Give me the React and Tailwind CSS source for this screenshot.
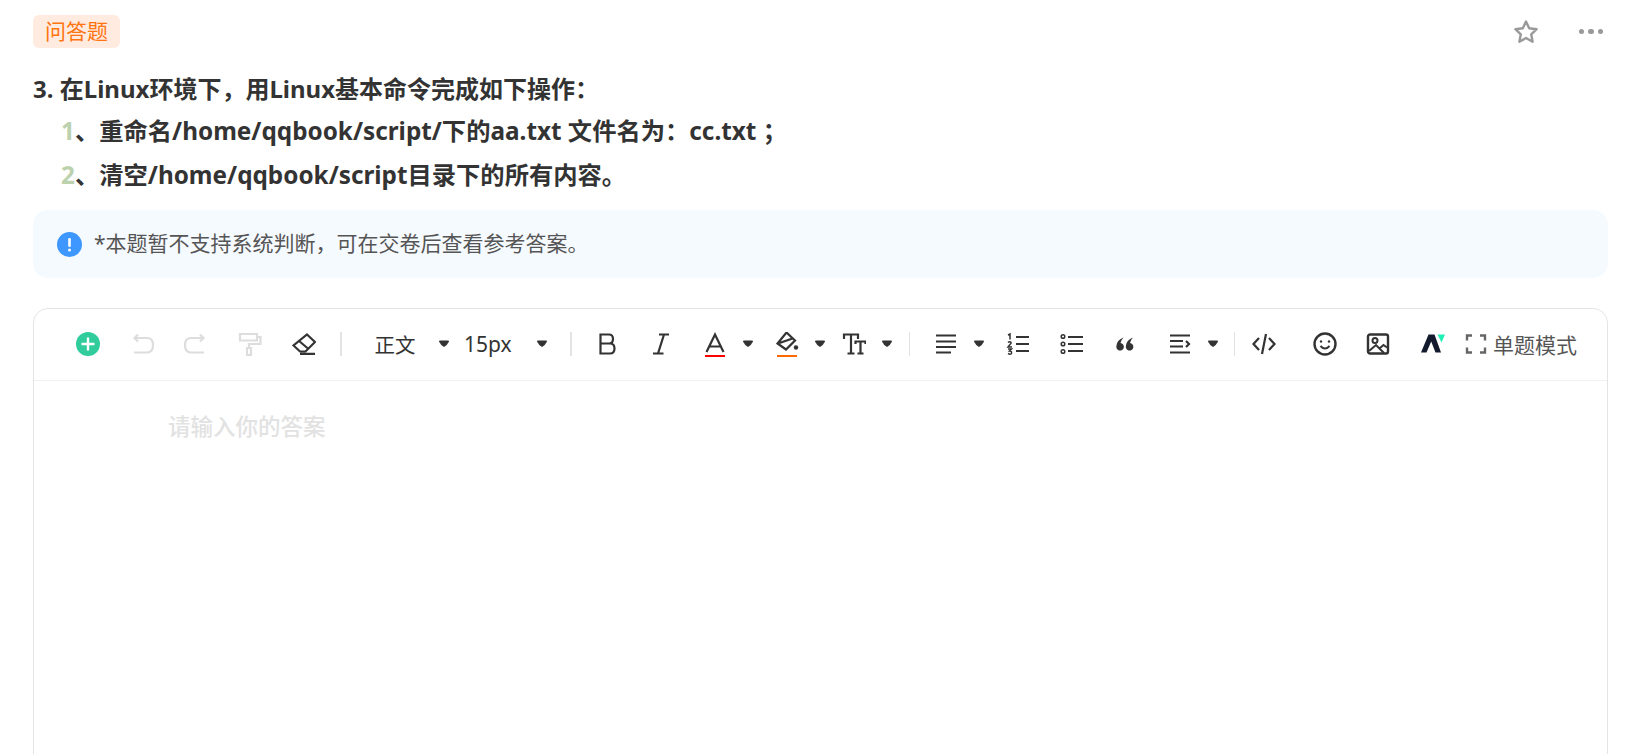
const D = "#333333";
const L = "#dddddd";

function Ico({ className = "", w = 24, h = 24, children, fill = "none", stroke = D, sw = 2.2 }) {
  return (
    <svg width={w} height={h} viewBox="0 0 24 24" fill={fill} stroke={stroke} strokeWidth={sw} strokeLinecap="butt" strokeLinejoin="miter" className={"shrink-0 " + className}>
      {children}
    </svg>
  );
}

function Caret({ className = "" }) {
  return (
    <svg width="12" height="8" viewBox="0 0 12 8" className={"shrink-0 " + className}>
      <path d="M1 1.5 Q1 0.5 2 0.5 H10 Q11 0.5 11 1.5 Q9.5 5 6 7 Q2.5 5 1 1.5Z" fill="#333" />
    </svg>
  );
}

function Sep({ className = "" }) {
  return <div className={"w-[1.5px] h-[24px] bg-[#e3e3e3] shrink-0 " + className} />;
}

export default function App() {
  return (
    <div className="h-[754px] overflow-hidden bg-white text-[#333] font-['Noto_Sans','Noto_Sans_CJK_SC',sans-serif]">
      <div className="pl-[33px] pr-[20px] pt-[15px]">
        <div className="flex items-center justify-between">
          <span className="h-[33px] w-[87px] rounded-[6px] bg-[#ffebdf] text-[#ff7410] text-[21px] leading-[33px] text-center">问答题</span>
          <div className="flex items-center">
            <svg width="26" height="26" viewBox="0 0 26 26" fill="none" stroke="#999" strokeWidth="2.4" strokeLinejoin="round">
              <path d="M13 2.5 L16.2 9.3 L23.6 10.2 L18.2 15.3 L19.6 22.7 L13 19 L6.4 22.7 L7.8 15.3 L2.4 10.2 L9.8 9.3Z" />
            </svg>
            <div className="flex gap-[4px] ml-[40px] mr-[5px]">
              <span className="w-[5.5px] h-[5.5px] rounded-full bg-[#999]" />
              <span className="w-[5.5px] h-[5.5px] rounded-full bg-[#999]" />
              <span className="w-[5.5px] h-[5.5px] rounded-full bg-[#999]" />
            </div>
          </div>
        </div>

        <div className="mt-[23px] text-[24px] leading-[36px] font-bold text-[#333]">3. 在Linux环境下，用Linux基本命令完成如下操作：</div>
        <div className="mt-[6px] pl-[28px] text-[24.3px] leading-[36px] font-bold text-[#333]">
          <span className="text-[#bcd1ad]">1</span>、重命名/home/qqbook/script/下的aa.txt 文件名为：cc.txt ；
        </div>
        <div className="mt-[8px] pl-[28px] text-[24.3px] leading-[36px] font-bold text-[#333]">
          <span className="text-[#bcd1ad]">2</span>、清空/home/qqbook/script目录下的所有内容。
        </div>

        <div className="mt-[17px] h-[68px] rounded-[15px] bg-[#f5faff] flex items-center pl-[24px]">
          <svg width="25" height="25" viewBox="0 0 25 25" className="shrink-0">
            <circle cx="12.5" cy="12.5" r="12.5" fill="#3d97ff" />
            <rect x="11.2" y="6" width="2.6" height="9" rx="1.2" fill="#fff" />
            <circle cx="12.5" cy="18" r="1.5" fill="#fff" />
          </svg>
          <span className="ml-[12px] text-[21px] text-[#555]">*本题暂不支持系统判断，可在交卷后查看参考答案。</span>
        </div>

        <div className="mt-[30px] h-[520px] rounded-t-[15px] border border-[#e4e4e4]">
          <div className="h-[72px] pb-[1px] border-b border-[#f1f1f1] flex items-center">
            <svg width="24" height="24" viewBox="0 0 24 24" className="shrink-0 ml-[42px]">
              <circle cx="12" cy="12" r="12" fill="#30cc9b" />
              <path d="M12 5.5V18.5M5.5 12H18.5" stroke="#fff" strokeWidth="2.4" />
            </svg>
            <Ico className="ml-[30.5px]" stroke={L}><path d="M7 2.5 L3.5 6 L7 9.5M3.5 6H16Q22 6 22 13Q22 20.5 16 20.5H3" /></Ico>
            <Ico className="ml-[28.5px]" stroke={L}><path d="M17 2.5 L20.5 6 L17 9.5M20.5 6H8Q2 6 2 13Q2 20.5 8 20.5H21" /></Ico>
            <Ico className="ml-[31px]" stroke={L}><path d="M2 2H19V8.5H2ZM19 5H22.5V12H11V16M9 16H13V23H9Z" /></Ico>
            <Ico className="ml-[30px]"><path d="M15 2.5 L23 10 L13.5 19.5 H8 L1.5 13.5Z M6.5 8.5 L16.5 17 M8 21.8H23" /></Ico>
            <Sep className="ml-[24px]" />
            <span className="ml-[33px] w-[42px] text-[20.5px] leading-none font-['Noto_Sans_CJK_SC',sans-serif] whitespace-nowrap">正文</span>
            <Caret className="ml-[21px]" />
            <span className="ml-[14.5px] w-[47px] text-[21px] leading-none whitespace-nowrap">15px</span>
            <Caret className="ml-[25px]" />
            <Sep className="ml-[22px]" />
            <Ico className="ml-[23.5px]"><path d="M5.5 2.5H14Q18 2.5 18 7Q18 11.5 14 11.5H5.5ZM5.5 11.5H15Q19.5 11.5 19.5 16.5Q19.5 21.5 15 21.5H5.5Z" /></Ico>
            <Ico className="ml-[30px]"><path d="M10 2.5H20M4 21.5H14.5M15 2.5L9 21.5" /></Ico>
            <div className="ml-[30px] shrink-0 relative w-[24px] h-[24px]">
              <Ico><path d="M3.5 20L12 2.5L20.5 20M6.5 14.5H17.5" /></Ico>
              <div className="absolute left-[2px] right-[2px] bottom-[-1px] h-[2.5px] bg-[#ff0000]" />
            </div>
            <Caret className="ml-[15px]" />
            <div className="ml-[21px] shrink-0 relative w-[24px] h-[24px]">
              <Ico><path d="M11.5 0.5L20 8.5L11 17.5L2.5 11.5ZM4.5 11L17.5 6.5" /><circle cx="21" cy="15.5" r="2.2" fill="#333" stroke="none" /></Ico>
              <div className="absolute left-[2px] right-[2px] bottom-[-1px] h-[2.5px] bg-[#ff6a00]" />
            </div>
            <Caret className="ml-[15px]" />
            <Ico className="ml-[16px]"><path d="M2 7V2.5H16V7M9 2.5V21.5M5.5 21.5H12.5M13.5 12V9.5H23.5V12M18.5 9.5V21.5M15.5 21.5H21.5" /></Ico>
            <Caret className="ml-[15px]" />
            <Sep className="ml-[15.5px]" />
            <Ico className="ml-[24px]"><path d="M2 3.5H22M2 9.5H22M2 15H22M2 20.5H17" /></Ico>
            <Caret className="ml-[15px]" />
            <svg width="24" height="24" viewBox="0 0 24 24" className="ml-[21px] shrink-0">
              <path d="M10 5H23M10 12H23M10 19H23" stroke="#333" strokeWidth="2.2" />
              <path d="M2 3L4 2V7.5M2 10.5Q3 9.5 4.5 10T4 12.5L2 15H6M2 17H5.5L3.5 19Q6 19 5.5 21T2 21.5" stroke="#333" strokeWidth="1.5" fill="none" />
            </svg>
            <svg width="24" height="24" viewBox="0 0 24 24" className="ml-[30px] shrink-0">
              <path d="M8 5H23M8 12H23M8 19H23" stroke="#333" strokeWidth="2.2" />
              <circle cx="3" cy="4.5" r="1.8" fill="none" stroke="#333" strokeWidth="1.5" />
              <circle cx="3" cy="12" r="1.8" fill="none" stroke="#333" strokeWidth="1.5" />
              <circle cx="3" cy="19.5" r="1.8" fill="none" stroke="#333" strokeWidth="1.5" />
            </svg>
            <svg width="24" height="24" viewBox="0 0 24 24" className="ml-[29px] shrink-0 -translate-y-[1px]">
              <path d="M10.5 6.5Q4 9 3.5 14.5A3.8 3.8 0 1 0 7.5 12Q7.8 9.5 10.5 6.5ZM20 6.5Q13.5 9 13 14.5A3.8 3.8 0 1 0 17 12Q17.3 9.5 20 6.5Z" fill="#333" />
            </svg>
            <Ico className="ml-[31px]"><path d="M2 3.5H22M2 9H15M2 14.5H15M2 20.5H22M18 9L21 12L18 15" /></Ico>
            <Caret className="ml-[15px]" />
            <Sep className="ml-[14.5px]" />
            <Ico className="ml-[17px]"><path d="M7 6L1.5 12L7 18M17 6L22.5 12L17 18M14 2L10 22" /></Ico>
            <svg width="24" height="24" viewBox="0 0 24 24" fill="none" stroke="#333" strokeWidth="2.4" className="ml-[37px] shrink-0">
              <circle cx="12" cy="12" r="10.5" />
              <path d="M7.5 14Q12 19 16.5 14" strokeWidth="2" />
              <circle cx="8" cy="9.5" r="1.2" fill="#333" stroke="none" />
              <circle cx="16" cy="9.5" r="1.2" fill="#333" stroke="none" />
            </svg>
            <svg width="24" height="24" viewBox="0 0 24 24" fill="none" stroke="#333" strokeWidth="2.4" className="ml-[29px] shrink-0">
              <rect x="2" y="2.5" width="20" height="19" rx="2" />
              <circle cx="9" cy="8.5" r="2.5" strokeWidth="2" />
              <path d="M3 19L10 13L18 21M14 16L17.5 13L21 15.5" strokeWidth="2" />
            </svg>
            <svg width="24" height="24" viewBox="0 0 24 24" className="ml-[31px] shrink-0">
              <path d="M0 20.5L7.5 2.5H13.5L20 20.5H14.5L10.2 9.5L5.5 20.5Z" fill="#141a2e" />
              <path d="M16.5 2.5H24L20.5 10.5Z" fill="#20f0b4" />
            </svg>
            <svg width="24" height="24" viewBox="0 0 24 24" fill="none" stroke="#666" strokeWidth="2.4" className="ml-[19px] shrink-0">
              <path d="M3 8.5V3.5H8M16 3.5H21V8.5M21 15.5V20.5H16M8 20.5H3V15.5" />
            </svg>
            <span className="ml-[5px] text-[21px] leading-none text-[#555] whitespace-nowrap font-['Noto_Sans_CJK_SC',sans-serif]">单题模式</span>
          </div>
          <div className="pl-[134px] pt-[29px] text-[22.5px] leading-[34px] font-medium text-[#e2e2e2]">请输入你的答案</div>
        </div>
      </div>
    </div>
  );
}
